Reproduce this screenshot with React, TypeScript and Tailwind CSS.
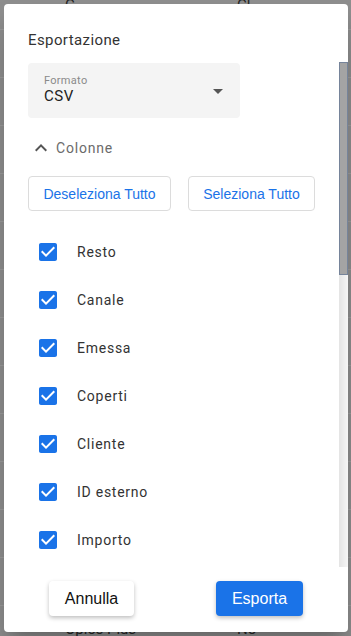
import React from 'react'

const columns = [
  'Resto',
  'Canale',
  'Emessa',
  'Coperti',
  'Cliente',
  'ID esterno',
  'Importo',
  'Data',
  'Stato',
]

const bgRows = [
  ['C', 'Cl'],
  ['', ''],
  ['', ''],
  ['', ''],
  ['', ''],
  ['', ''],
  ['', ''],
  ['', ''],
  ['', ''],
  ['', ''],
  ['', ''],
  ['', ''],
  ['', ''],
  ['Opice Plus', 'No'],
]

function CheckIcon() {
  return (
    <svg viewBox="0 0 24 24" className="w-6 h-6 flex-shrink-0" fill="#1a73e8">
      <path d="M19 3H5c-1.11 0-2 .9-2 2v14c0 1.1.89 2 2 2h14c1.11 0 2-.9 2-2V5c0-1.1-.89-2-2-2zm-9 14l-5-5 1.41-1.41L10 14.17l7.59-7.59L19 8l-9 9z" />
    </svg>
  )
}

export default function App() {
  return (
    <div className="relative w-[351px] h-[636px] overflow-hidden bg-[#8f8f8f] font-['Roboto',sans-serif]">
      {/* Page behind the overlay */}
      <div className="flex flex-col -mt-[18px]">
        {bgRows.map((row, i) => (
          <div
            key={i}
            className="h-12 flex items-center border-b border-[#9b9b9b] text-[15px] text-[#262626]"
          >
            <span className="w-[172px] pl-[65px]">{row[0]}</span>
            <span className="pl-[65px]">{row[1]}</span>
          </div>
        ))}
      </div>

      {/* Dialog */}
      <div className="absolute left-1 top-1 w-[344px] h-[628px] bg-white rounded flex flex-col shadow-[0_11px_15px_-7px_rgba(0,0,0,0.2),0_24px_38px_3px_rgba(0,0,0,0.14)]">
        <div className="pt-[26px] pb-3 px-6 h-[58px]">
          <h2 className="text-[15px] leading-5 tracking-[0.4px] text-[#333]">Esportazione</h2>
        </div>

        <div className="flex-1 flex min-h-0">
          <div className="flex-1 overflow-hidden pl-6">
            {/* Formato select */}
            <div className="mt-px w-[212px] h-[55px] rounded bg-[#f4f4f4] flex items-center pl-4 pr-[10px]">
              <div className="flex-1 flex flex-col -mt-[3px]">
                <span className="text-[11px] leading-[14px] text-[#8a8a8a] tracking-[0.3px]">Formato</span>
                <span className="text-[15px] leading-[16px] text-[#222] tracking-[0.6px]">CSV</span>
              </div>
              <svg viewBox="0 0 24 24" className="w-6 h-6" fill="#555">
                <path d="M7 10l5 5 5-5z" />
              </svg>
            </div>

            {/* Colonne */}
            <div className="mt-[18px] h-6 flex items-center gap-[3px] ml-px">
              <svg viewBox="0 0 24 24" className="w-6 h-6" fill="#555">
                <path d="M12 8l-6 6 1.41 1.41L12 10.83l4.59 4.58L18 14z" />
              </svg>
              <span className="text-sm text-[#6b6b6b] tracking-[0.8px]">Colonne</span>
            </div>

            <div className="mt-4 flex gap-[17px]">
              <button className="h-[35px] w-[143px] rounded border border-[#dcdcdc] text-sm text-[#1a73e8] font-['Liberation_Sans',sans-serif]">
                Deseleziona Tutto
              </button>
              <button className="h-[35px] w-[127px] rounded border border-[#dcdcdc] text-sm text-[#1a73e8] font-['Liberation_Sans',sans-serif]">
                Seleziona Tutto
              </button>
            </div>

            <ul className="mt-[17px]">
              {columns.map((c) => (
                <li key={c} className="h-12 flex items-center gap-[17px] pl-2">
                  <CheckIcon />
                  <span className="text-sm text-[#333] tracking-[0.75px]">{c}</span>
                </li>
              ))}
            </ul>
          </div>

          {/* Scrollbar */}
          <div className="w-[9px] flex flex-col bg-[linear-gradient(90deg,#e4e4e4,#f6f6f6)]">
            <div className="h-[213px] bg-[#a4a4a4] border border-[#76849a]" />
          </div>
        </div>

        <div className="h-[65px] flex justify-between items-start pt-[14px] px-[45px]">
          <button className="h-[35px] w-[85px] rounded bg-white text-base text-[#111] font-['Liberation_Sans',sans-serif] shadow-[0_2px_4px_rgba(0,0,0,0.25)]">
            Annulla
          </button>
          <button className="h-[35px] w-[87px] rounded bg-[#1a73e8] text-base text-white font-['Liberation_Sans',sans-serif] shadow-[0_2px_4px_rgba(0,0,0,0.25)]">
            Esporta
          </button>
        </div>
      </div>
    </div>
  )
}
